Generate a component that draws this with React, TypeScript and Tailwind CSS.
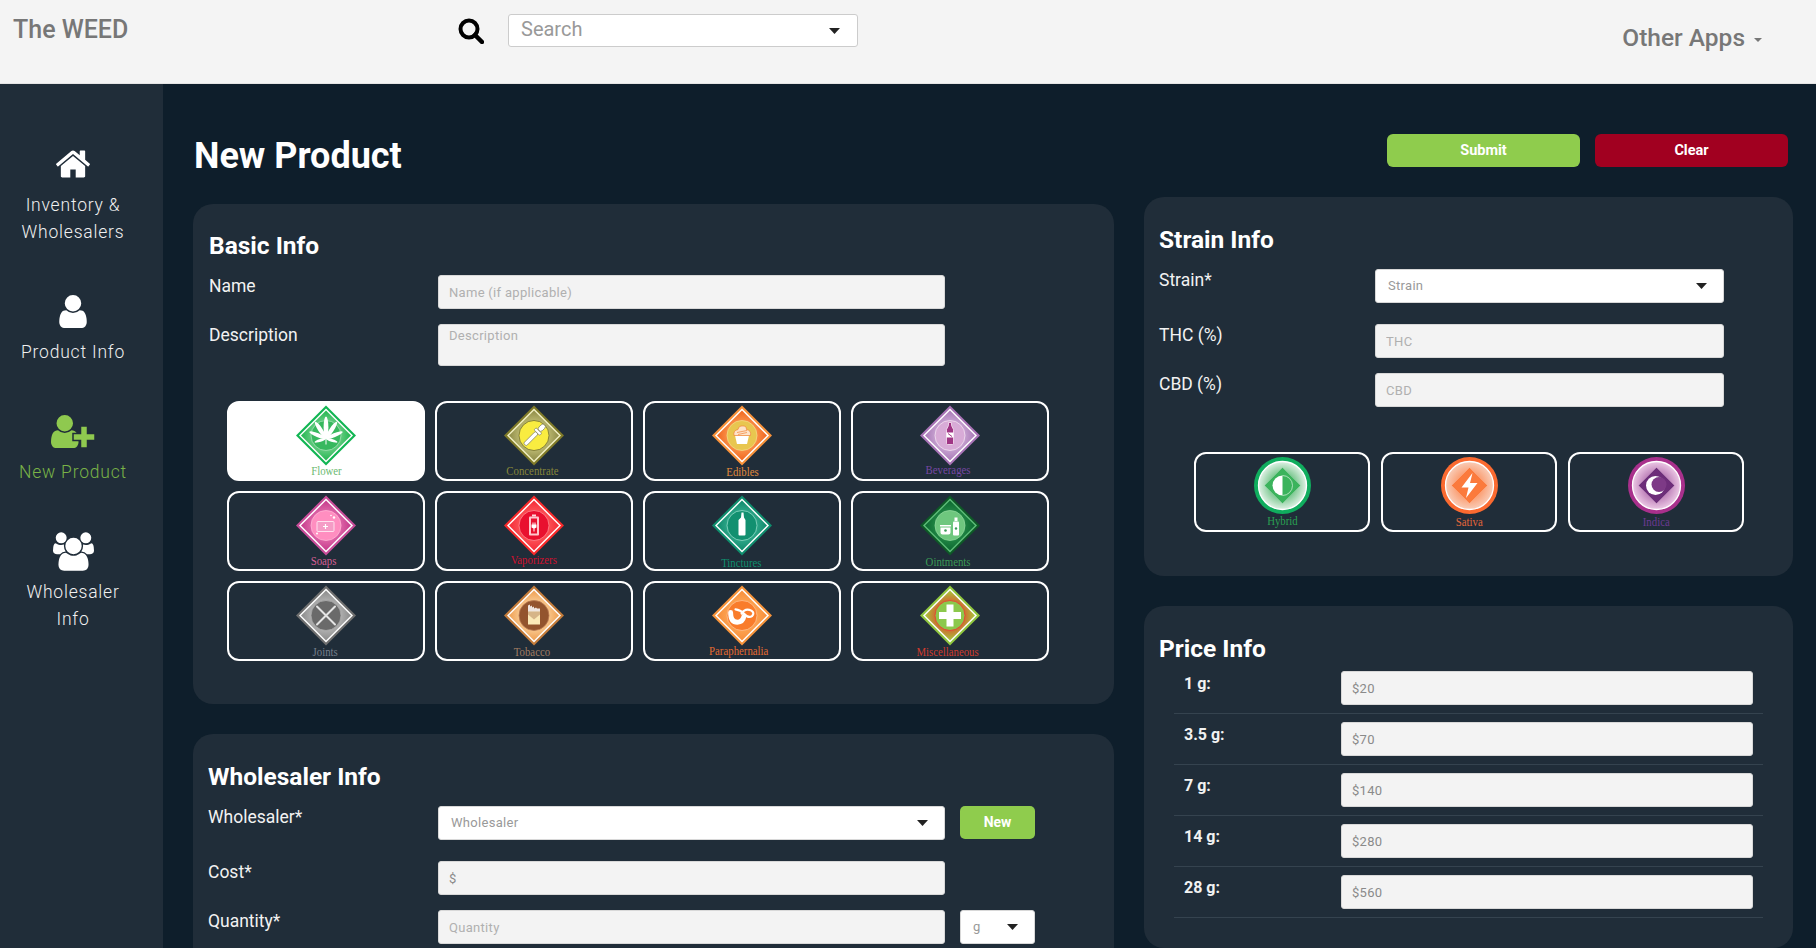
import type { ReactNode } from 'react';

const HOME =
  'M1472 992v480q0 26-19 45t-45 19h-384v-384h-256v384h-384q-26 0-45-19t-19-45v-480q0-1 .5-3t.5-3l575-474 575 474q1 2 1 6zm223-69l-62 74q-8 9-21 11h-3q-13 0-21-7l-692-577-692 577q-12 8-24 7-13-2-21-11l-62-74q-8-10-7-23.5t11-21.5l719-599q32-26 76-26t76 26l244 204v-195q0-14 9-23t23-9h192q14 0 23 9t9 23v408l219 182q10 8 11 21.5t-7 23.5z';
const USER =
  'M1536 1399q0 109-62.5 187t-150.5 78h-854q-88 0-150.5-78t-62.5-187q0-85 8.5-160.5t31.5-152 58.5-131 94-89 134.5-34.5q131 128 313 128t313-128q76 0 134.5 34.5t94 89 58.5 131 31.5 152 8.5 160.5zm-256-887q0 159-112.5 271.5t-271.5 112.5-271.5-112.5-112.5-271.5 112.5-271.5 271.5-112.5 271.5 112.5 112.5 271.5z';
const USERS =
  'M593 896q-162 5-265 128h-134q-82 0-138-40.5t-56-118.5q0-353 124-353 6 0 43.5 21t97.5 42.5 119 21.5q67 0 133-23-5 37-5 66 0 139 81 256zm1071 637q0 120-73 189.5t-194 69.5h-874q-121 0-194-69.5t-73-189.5q0-53 3.5-103.5t14-109 26.5-108.5 43-97.5 62-81 85.5-53.5 111.5-20q10 0 43 21.5t73 48 107 48 135 21.5 135-21.5 107-48 73-48 43-21.5q61 0 111.5 20t85.5 53.5 62 81 43 97.5 26.5 108.5 14 109 3.5 103.5zm-1024-1277q0 106-75 181t-181 75-181-75-75-181 75-181 181-75 181 75 75 181zm704 384q0 159-112.5 271.5t-271.5 112.5-271.5-112.5-112.5-271.5 112.5-271.5 271.5-112.5 271.5 112.5 112.5 271.5zm576 225q0 78-56 118.5t-138 40.5h-134q-103-123-265-128 81-117 81-256 0-29-5-66 66 23 133 23 59 0 119-21.5t97.5-42.5 43.5-21q124 0 124 353zm-128-609q0 106-75 181t-181 75-181-75-75-181 75-181 181-75 181 75 75 181z';

function Caret({ className = 'fill-[#222]' }: { className?: string }) {
  return (
    <svg width="11" height="6" viewBox="0 0 11 6" className={className}>
      <polygon points="0,0 11,0 5.5,6" />
    </svg>
  );
}

function TextField({ placeholder, className = 'w-[507px]', dark }: { placeholder: string; className?: string; dark?: boolean }) {
  return (
    <input
      readOnly
      placeholder={placeholder}
      className={`h-[34px] shrink-0 rounded-[3px] border border-[#d8d8d8] bg-[#f3f3f3] px-[10px] text-[13px] tracking-[0.3px] ${
        dark ? 'placeholder:text-[#8a8a8a]' : 'placeholder:text-[#b0b0b0]'
      } ${className}`}
    />
  );
}

function SelectBox({ label, className = 'w-[507px]' }: { label: string; className?: string }) {
  return (
    <div
      className={`flex h-[34px] shrink-0 items-center justify-between rounded-[3px] border border-[#d8d8d8] bg-white pl-[12px] pr-[16px] text-[13px] tracking-[0.3px] text-[#999] ${className}`}
    >
      <span>{label}</span>
      <Caret />
    </div>
  );
}

function FieldLabel({ children, className = 'w-[229px]' }: { children: ReactNode; className?: string }) {
  return <div className={`shrink-0 text-[17.5px] leading-[22px] text-[#f2f2f2] ${className}`}>{children}</div>;
}

function CardTitle({ children }: { children: ReactNode }) {
  return <h2 className="mb-[-1px] mt-[1px] text-[24.5px] font-bold leading-[30px] text-white">{children}</h2>;
}

type Look = { edge: string; from: string; to: string; line: string; disc: string; ring: string };

function CannabisLeaf() {
  const leaves = [
    [0, 11, 2.4],
    [33, 10, 2.2],
    [-33, 10, 2.2],
    [68, 9, 1.9],
    [-68, 9, 1.9],
    [108, 6, 1.4],
    [-108, 6, 1.4],
  ];
  return (
    <g fill="#fff">
      {leaves.map(([a, l, w]) => (
        <ellipse key={a} cx="30" cy={33 - l} rx={w} ry={l} transform={`rotate(${a} 30 33)`} />
      ))}
      <rect x="29.5" y="32" width="1" height="7" />
    </g>
  );
}

const glyphs: Record<string, ReactNode> = {
  Flower: <CannabisLeaf />,
  Concentrate: (
    <g transform="rotate(45 30 30)">
      <rect x="28" y="26" width="4" height="17" rx="1.5" fill="#fff" stroke="#8a8a6a" strokeWidth="0.8" />
      <rect x="26" y="23" width="8" height="3" rx="1" fill="#fff" stroke="#8a8a6a" strokeWidth="0.8" />
      <rect x="27.5" y="15" width="5" height="8" rx="2.5" fill="#fff" stroke="#8a8a6a" strokeWidth="0.8" />
    </g>
  ),
  Edibles: (
    <g>
      <path d="M23 30h14l-2 8.5h-10z" fill="#fff" />
      <path d="M22 30q-1-5 4-6 1-4 4.500-3.500 4-.5 4 3.500 5 1 4 6z" fill="#fde3c8" stroke="#f2823a" strokeWidth="0.7" />
      <path d="M25 27l10-2M26 29l9-2" stroke="#f2823a" strokeWidth="0.7" />
    </g>
  ),
  Beverages: (
    <g>
      <path d="M28.500 17h3v3l2 4v14q0 1-1 1h-5q-1 0-1-1v-14l2-4z" fill="#a03585" stroke="#f6e6f2" strokeWidth="0.8" />
      <rect x="26.500" y="27" width="7" height="5" fill="#fff" />
      <path d="M28 28l4 3" stroke="#a03585" strokeWidth="1" />
    </g>
  ),
  Soaps: (
    <g fill="none" stroke="#ffe9f3" strokeWidth="0.9">
      <rect x="21" y="26" width="17" height="10" rx="1" fill="#f59cc6" />
      <path d="M29.500 28.500v5M27 31h5" stroke="#fff" strokeWidth="1.200" />
      <circle cx="38" cy="22" r="1.200" fill="#fff" stroke="none" />
      <circle cx="35" cy="20" r="0.800" fill="#fff" stroke="none" />
      <circle cx="21" cy="38" r="1" fill="#fff" stroke="none" />
    </g>
  ),
  Vaporizers: (
    <g>
      <rect x="28" y="19" width="4" height="2" fill="#ffd5da" />
      <rect x="25" y="21" width="10" height="19" rx="1" fill="#ffc6cd" />
      <rect x="27" y="23" width="6" height="15" fill="#e8102f" />
      <path d="M28.500 27v2h-1v3l2 1v3h1v-3l2-1v-3h-1v-2h-1v2h-1v-2z" fill="#fff" />
    </g>
  ),
  Tinctures: <path d="M29 17h2l.5 5 1.500 2.500V39q0 1-1 1h-5q-1 0-1-1V24.500L28.500 22z" fill="#fff" transform="translate(0.500 0)" />,
  Ointments: (
    <g fill="#fff">
      <path d="M20 29.500h11v1.500h-11zM20.500 32h10v5q0 2-2 2h-6q-2 0-2-2z" />
      <rect x="33" y="26" width="6" height="14" rx="1" />
      <rect x="34.500" y="22" width="3" height="3.500" />
      <circle cx="25.500" cy="35" r="1.300" fill="#3b9b57" />
      <circle cx="36" cy="33" r="1.200" fill="#3b9b57" />
    </g>
  ),
  Joints: <path d="M21 21l18 18M39 21L21 39" stroke="#e4e4e4" strokeWidth="2" strokeLinecap="round" />,
  Tobacco: (
    <g>
      <path d="M24 27v-7l2-1v2l2-1v2l2-1v2l2-1 1 1 3 0v7z" fill="#fff" opacity="0.85" />
      <rect x="24" y="26" width="12" height="13" fill="#fbe9b8" />
      <path d="M24 29l6 5 6-5v-3H24z" fill="#93542e" opacity="0.35" />
    </g>
  ),
  Paraphernalia: (
    <g fill="none" stroke="#fff" strokeLinecap="round" transform="translate(-7 -6) scale(1.22)">
      <path d="M21 27q0 8 5.500 8 4.500 0 5.500-5" strokeWidth="4" />
      <path d="M30 28q3-5 8-2.500 3 2 .5 4.500-3 2-6.500-2-3-3-7-3.500" strokeWidth="1.800" />
    </g>
  ),
  Miscellaneous: <path d="M26.500 19h7v7.500H41v7h-7.500V41h-7v-7.500H19v-7h7.500z" fill="#fff" />,
};

function CategoryIcon({ name, look }: { name: string; look: Look }) {
  const id = `grad-${name}`;
  return (
    <svg width="60" height="61" viewBox="0 0 60 60" className="shrink-0">
      <defs>
        <radialGradient id={id}>
          <stop offset="25%" stopColor={look.from} />
          <stop offset="100%" stopColor={look.to} />
        </radialGradient>
      </defs>
      <polygon points="30,0 60,30 30,60 0,30" fill={look.edge} />
      <polygon points="30,3 57,30 30,57 3,30" fill={look.line} />
      <polygon points="30,5 55,30 30,55 5,30" fill={`url(#${id})`} />
      <circle cx="30" cy="30" r="15" fill={look.disc} stroke={look.ring} strokeWidth="0.8" />
      {glyphs[name]}
    </svg>
  );
}

const categories: { name: string; look: Look; label: string }[] = [
  {
    name: 'Flower',
    look: { edge: '#10b552', line: '#ffffff', from: '#96dca6', to: '#22b650', disc: '#37b85e', ring: '#a6e2b6' },
    label: 'text-[#6cba72]',
  },
  {
    name: 'Concentrate',
    look: { edge: '#7f7a28', line: '#f3f1c4', from: '#dad78e', to: '#8f8c48', disc: '#f9ec40', ring: '#6d6b33' },
    label: 'text-[#85853a] -translate-x-[2px]',
  },
  {
    name: 'Edibles',
    look: { edge: '#f8923a', line: '#ffffff', from: '#ffad66', to: '#f1661f', disc: '#e8c64f', ring: '#f4d987' },
    label: 'text-[#e08a3c] translate-y-[1px]',
  },
  {
    name: 'Beverages',
    look: { edge: '#a772b5', line: '#ffffff', from: '#dcc0e3', to: '#a979b7', disc: '#d8abd7', ring: '#f2e1f1' },
    label: 'text-[#7647a3] -translate-x-[2px] -translate-y-[1px]',
  },
  {
    name: 'Soaps',
    look: { edge: '#c94c99', line: '#ffffff', from: '#ef86bd', to: '#c53a8b', disc: '#ff8ec0', ring: '#ffb4d6' },
    label: 'text-[#d55f96] -translate-x-[2px]',
  },
  {
    name: 'Vaporizers',
    look: { edge: '#f82a2a', line: '#ffffff', from: '#ff6d6d', to: '#f52b36', disc: '#e9102f', ring: '#ff8b92' },
    label: 'text-[#d1102f] -translate-y-[1px]',
  },
  {
    name: 'Tinctures',
    look: { edge: '#0e8d6d', line: '#ffffff', from: '#45ba9d', to: '#0f8a6c', disc: '#129070', ring: '#92dcc8' },
    label: 'text-[#0e8f6e] -translate-x-[1px] translate-y-[2px]',
  },
  {
    name: 'Ointments',
    look: { edge: '#0d5826', line: '#5cbd78', from: '#2f9b52', to: '#0c6830', disc: '#6ec77e', ring: '#8ed79b' },
    label: 'text-[#3b9a55] -translate-x-[2px] translate-y-[1px]',
  },
  {
    name: 'Joints',
    look: { edge: '#6f6f6f', line: '#ffffff', from: '#cbcbcb', to: '#8b8b8b', disc: '#6a6a6a', ring: '#adadad' },
    label: 'text-[#757f8c] -translate-x-[1px] translate-y-[1px]',
  },
  {
    name: 'Tobacco',
    look: { edge: '#c47c3a', line: '#ffffff', from: '#ffe4b8', to: '#ef9f52', disc: '#93542e', ring: '#b97b53' },
    label: 'text-[#a17c62] -translate-x-[2px] translate-y-[1px]',
  },
  {
    name: 'Paraphernalia',
    look: { edge: '#f7943b', line: '#ffffff', from: '#ffb263', to: '#f88e3a', disc: '#f97c2b', ring: '#ffc192' },
    label: 'text-[#e56b30] -translate-x-[3px]',
  },
  {
    name: 'Miscellaneous',
    look: { edge: '#8fc63e', line: '#ffffff', from: '#ee2a2a', to: '#a6c63a', disc: '#8cc84c', ring: '#f23333' },
    label: 'text-[#d03b2d] -translate-x-[2px] translate-y-[1px]',
  },
];

const strains = [
  {
    name: 'Hybrid',
    edge: '#10ad5e',
    from: '#4fb56a',
    to: '#dff1e5',
    diamond: '#3bb35c',
    label: 'text-[#2aa052] -translate-y-[1px]',
    glyph: (
      <g>
        <path d="M28.500 18.500a10 10 0 0 0 0 20z" fill="#fff" />
        <path d="M28.500 18.500a10 10 0 0 1 0 20" fill="none" stroke="#c9ecd3" strokeWidth="0.8" />
      </g>
    ),
  },
  {
    name: 'Sativa',
    edge: '#fb6a30',
    from: '#fb8a55',
    to: '#f9cdb8',
    diamond: '#fb7a3c',
    label: 'text-[#e5663a]',
    glyph: <path d="M31.500 16L20.500 30.500h7L25 41l11.500-15h-7.500z" fill="#fff" />,
  },
  {
    name: 'Indica',
    edge: '#a9308c',
    from: '#a860a5',
    to: '#ecc8e5',
    diamond: '#6d2d79',
    label: 'text-[#6c3a92]',
    glyph: (
      <g>
        <circle cx="27.500" cy="28.500" r="9.500" fill="#fff" />
        <circle cx="31" cy="27.500" r="7.500" fill="#7d3a86" />
      </g>
    ),
  },
];

function StrainIcon({ name, edge, from, to, diamond, glyph }: (typeof strains)[number]) {
  const id = `strain-${name}`;
  return (
    <svg width="57" height="57" viewBox="0 0 57 57" className="shrink-0">
      <defs>
        <radialGradient id={id}>
          <stop offset="30%" stopColor={from} />
          <stop offset="100%" stopColor={to} />
        </radialGradient>
      </defs>
      <circle cx="28.500" cy="28.500" r="28.500" fill={edge} />
      <circle cx="28.500" cy="28.500" r="24" fill={`url(#${id})`} stroke="#fff" strokeWidth="1.300" />
      <polygon points="28.500,10.500 46.500,28.500 28.500,46.500 10.500,28.500" fill={diamond} stroke="#ffffff55" strokeWidth="0.500" />
      {glyph}
    </svg>
  );
}

function SideItem({ icon, lines, active }: { icon: ReactNode; lines: string[]; active?: boolean }) {
  return (
    <div className={`flex flex-col items-center text-[17.5px] font-light leading-[27px] tracking-[0.8px] ${active ? 'text-[#79b347]' : 'text-[#f0f0f0]'}`}>
      <div className="mb-[11px] flex h-[39px] items-end">{icon}</div>
      {lines.map((l) => (
        <div key={l}>{l}</div>
      ))}
    </div>
  );
}

function Sidebar() {
  return (
    <aside className="flex w-[163px] shrink-0 flex-col gap-[43px] bg-[#202d39] pr-[17px] pt-[58px]">
      <SideItem
        lines={['Inventory &', 'Wholesalers']}
        icon={
          <svg width="34" height="28" viewBox="90 250 1612 1290" fill="#fff" className="mb-[3px]">
            <path d={HOME} />
          </svg>
        }
      />
      <SideItem
        lines={['Product Info']}
        icon={
          <svg width="28" height="33" viewBox="256 128 1280 1536" fill="#fff">
            <path d={USER} />
          </svg>
        }
      />
      <SideItem
        active
        lines={['New Product']}
        icon={
          <svg width="44" height="33" viewBox="0 0 44 33">
            <g transform="translate(0 0) scale(0.0215) translate(-256 -128)" fill="#8fc94f">
              <path d={USER} />
            </g>
            <path
              d="M29.500 11h7v7.500H44v7h-7.500V33h-7v-7.500H22v-7h7.500z"
              fill="#8fc94f"
              stroke="#202d39"
              strokeWidth="1.500"
            />
          </svg>
        }
      />
      <SideItem
        lines={['Wholesaler', 'Info']}
        icon={
          <svg width="41" height="39" viewBox="0 0 1920 1792" fill="#fff" className="-mb-[3px]">
            <path d={USERS} />
          </svg>
        }
      />
    </aside>
  );
}

export default function App() {
  return (
    <div className="flex h-screen flex-col overflow-hidden bg-[#0e1e2b] font-[Roboto,sans-serif]">
      <header className="flex h-[84px] shrink-0 items-start border-b border-[#e4e4e4] bg-[#f4f4f4] pl-[13px] pr-[54px] pt-[14px]">
        <div className="w-[445px] text-[25px] font-medium leading-[32px] text-[#777]">The WEED</div>
        <svg width="26" height="26" viewBox="0 0 26 26" className="mt-[4px]" fill="none" stroke="#000">
          <circle cx="11" cy="11" r="8.500" strokeWidth="4" />
          <path d="M17 17l7 7" strokeWidth="4.500" strokeLinecap="round" />
        </svg>
        <div className="ml-[24px] flex h-[33px] w-[350px] items-center justify-between rounded-[3px] border border-[#ccc] bg-white pl-[12px] pr-[17px] text-[20px] text-[#999]">
          <span className="-mt-[3px]">Search</span>
          <Caret />
        </div>
        <div className="ml-auto mt-[8px] flex items-center gap-[9px] text-[24.5px] font-medium leading-[32px] text-[#777]">
          <span>Other Apps</span>
          <svg width="8" height="4" viewBox="0 0 8 4" className="mt-[4px] fill-[#777]">
            <polygon points="0,0 8,0 4,4" />
          </svg>
        </div>
      </header>

      <div className="flex min-h-0 flex-1">
        <Sidebar />
        <main className="flex min-w-0 flex-1 gap-[30px] pl-[30px]">
          <div className="w-[921px] shrink-0">
            <h1 className="ml-[1px] mb-[26px] mt-[50px] text-[36px] font-bold leading-[44px] text-white">New Product</h1>

            <section className="rounded-[20px] bg-[#202d39] pb-[43px] pl-[16px] pt-[26px]">
              <CardTitle>Basic Info</CardTitle>
              <div className="mt-[15px] flex">
                <FieldLabel>Name</FieldLabel>
                <TextField placeholder="Name (if applicable)" />
              </div>
              <div className="mt-[15px] flex">
                <FieldLabel>Description</FieldLabel>
                <textarea
                  readOnly
                  placeholder="Description"
                  className="h-[42px] w-[507px] resize-none rounded-[3px] border border-[#d8d8d8] bg-[#f3f3f3] px-[10px] py-[1px] text-[13px] tracking-[0.3px] placeholder:text-[#b0b0b0]"
                />
              </div>
              <div className="ml-[18px] mt-[35px] grid grid-cols-[repeat(4,198px)] gap-x-[10px] gap-y-[10px]">
                {categories.map((c) => (
                  <button
                    key={c.name}
                    className={`flex h-[80px] flex-col items-center rounded-[12px] border-2 border-white pt-[2px] font-['Liberation_Serif',serif] text-[13px] leading-[12px] ${
                      c.name === 'Flower' ? 'bg-white' : ''
                    }`}
                  >
                    <CategoryIcon name={c.name} look={c.look} />
                    <span className={`-mt-[1px] scale-x-[0.83] ${c.label}`}>{c.name}</span>
                  </button>
                ))}
              </div>
            </section>

            <section className="mt-[30px] rounded-[20px] bg-[#202d39] pb-[30px] pl-[15px] pt-[27px]">
              <CardTitle>Wholesaler Info</CardTitle>
              <div className="mt-[15px] flex">
                <FieldLabel className="w-[230px]">Wholesaler*</FieldLabel>
                <SelectBox label="Wholesaler" />
                <button className="ml-[15px] h-[33px] w-[75px] rounded-[5px] bg-[#8fcc4d] text-[14px] font-bold text-white">New</button>
              </div>
              <div className="mt-[21px] flex">
                <FieldLabel className="w-[230px]">Cost*</FieldLabel>
                <TextField placeholder="$" dark />
              </div>
              <div className="mt-[15px] flex">
                <FieldLabel className="w-[230px]">Quantity*</FieldLabel>
                <TextField placeholder="Quantity" />
                <SelectBox label="g" className="ml-[15px] w-[75px] pr-[14px]" />
              </div>
            </section>
          </div>

          <div className="w-[649px] shrink-0">
            <div className="mr-[5px] mt-[50px] flex justify-end gap-[15px]">
              <button className="h-[33px] w-[193px] rounded-[6px] bg-[#8fcc4d] text-[14.5px] font-bold text-white">Submit</button>
              <button className="h-[33px] w-[193px] rounded-[6px] bg-[#a10020] text-[14.5px] font-bold text-white">Clear</button>
            </div>

            <section className="mt-[30px] rounded-[20px] bg-[#202d39] pb-[44px] pl-[15px] pt-[27px]">
              <CardTitle>Strain Info</CardTitle>
              <div className="mt-[15px] flex">
                <FieldLabel className="w-[216px]">Strain*</FieldLabel>
                <SelectBox label="Strain" className="w-[349px]" />
              </div>
              <div className="mt-[21px] flex">
                <FieldLabel className="w-[216px]">THC (%)</FieldLabel>
                <TextField placeholder="THC" className="w-[349px]" />
              </div>
              <div className="mt-[15px] flex">
                <FieldLabel className="w-[216px]">CBD (%)</FieldLabel>
                <TextField placeholder="CBD" className="w-[349px]" />
              </div>
              <div className="ml-[35px] mt-[45px] flex gap-[11px]">
                {strains.map((s) => (
                  <button
                    key={s.name}
                    className="flex h-[80px] w-[176px] flex-col items-center rounded-[12px] border-2 border-white pt-[3px] font-['Liberation_Serif',serif] text-[13px] leading-[12px]"
                  >
                    <StrainIcon {...s} />
                    <span className={`mt-[2px] scale-x-[0.83] ${s.label}`}>{s.name}</span>
                  </button>
                ))}
              </div>
            </section>

            <section className="mt-[30px] rounded-[20px] bg-[#202d39] pb-[30px] pl-[15px] pt-[27px]">
              <CardTitle>Price Info</CardTitle>
              <div className="ml-[15px] w-[589px]">
                {[
                  ['1 g:', '$20'],
                  ['3.5 g:', '$70'],
                  ['7 g:', '$140'],
                  ['14 g:', '$280'],
                  ['28 g:', '$560'],
                ].map(([size, price]) => (
                  <div key={size} className="flex border-b border-[#35434f] py-[8px] pl-[10px]">
                    <div className="mt-[2px] w-[157px] shrink-0 text-[16px] font-bold leading-[22px] text-[#f2f2f2]">{size}</div>
                    <TextField placeholder={price} dark className="w-[412px]" />
                  </div>
                ))}
              </div>
            </section>
          </div>
        </main>
      </div>
    </div>
  );
}
